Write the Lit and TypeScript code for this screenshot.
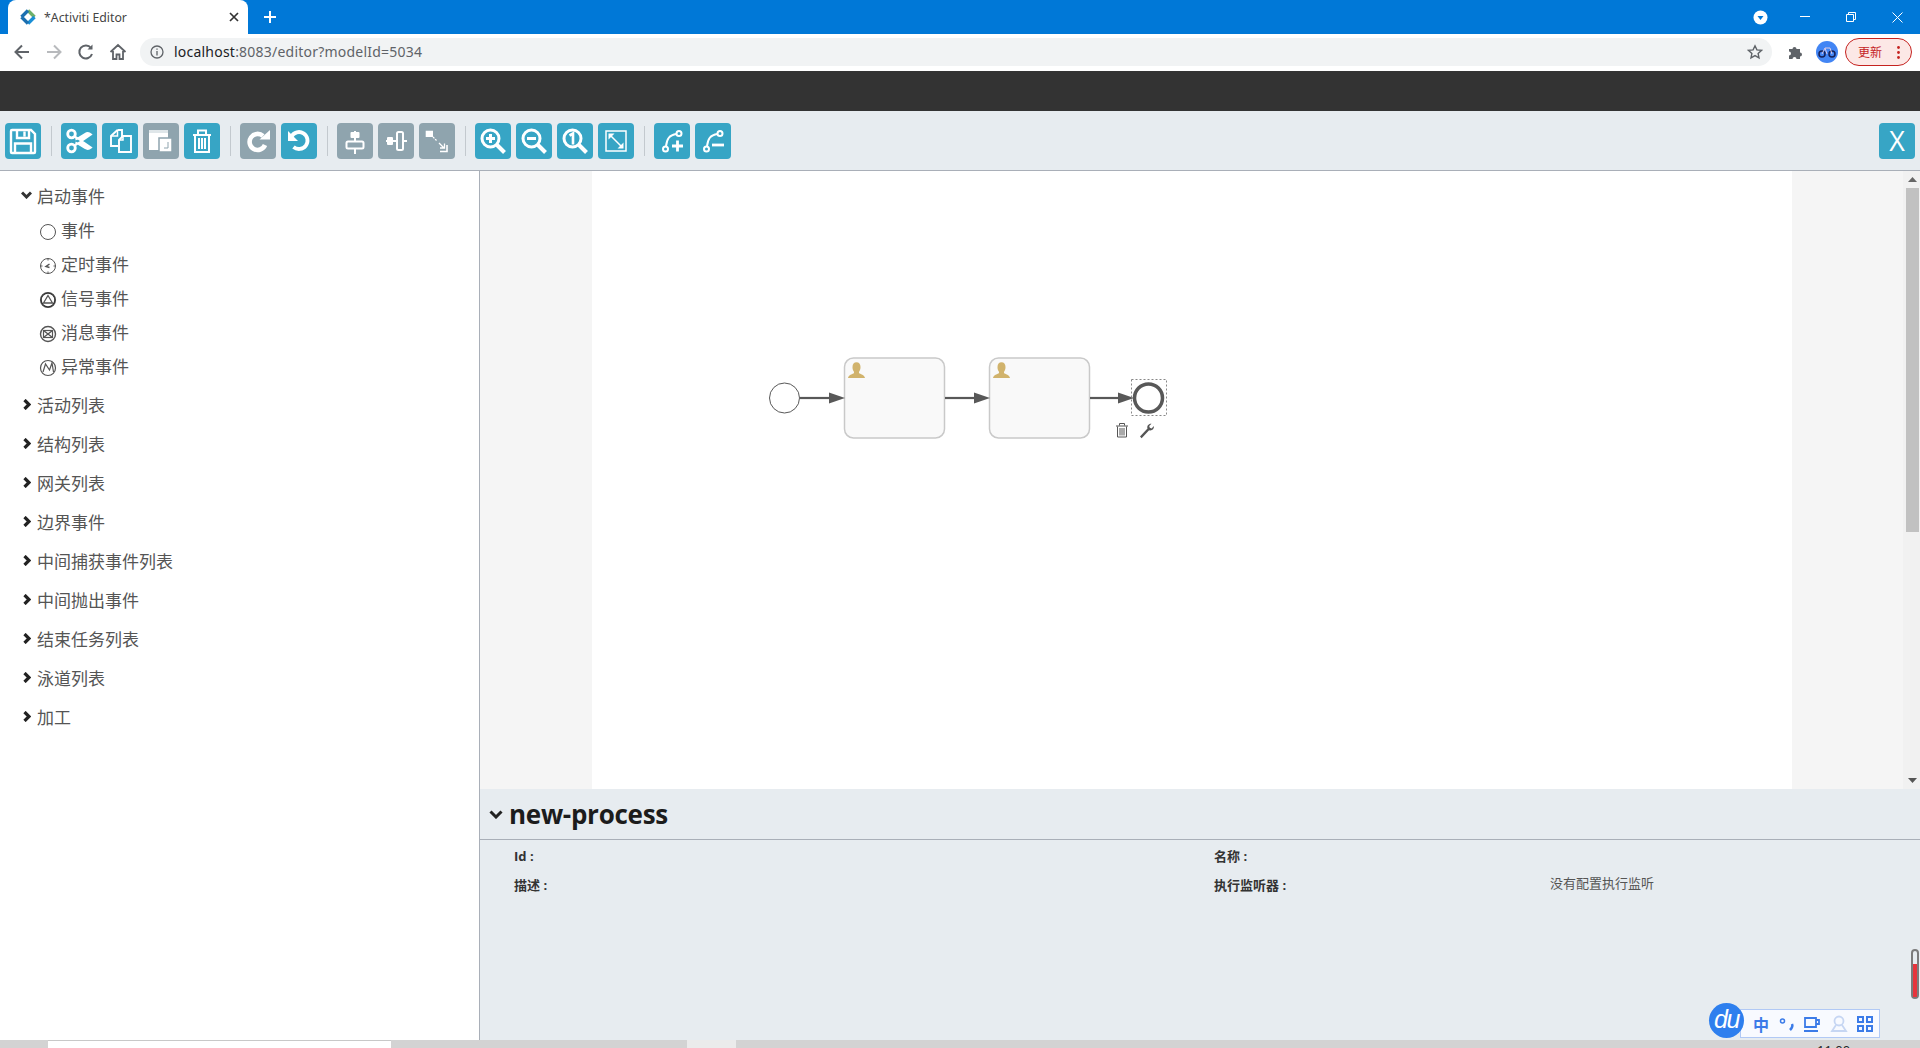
import { LitElement, html, css, svg } from "lit";
import { customElement } from "lit/decorators.js";

const S = (c: unknown, size = 36) => html`<svg class="ic" width=${size} height=${size} viewBox="0 0 36 36" fill="none" stroke="#fff" stroke-width="2">${c}</svg>`;

const icons: Record<string, unknown> = {
  save: svg`<path d="M7 7h19l4 4v18a1 1 0 0 1-1 1H7a1 1 0 0 1-1-1V8a1 1 0 0 1 1-1z" stroke-width="2.4"/><path d="M12 7v8h12V7M19.500 8.500v5" stroke-width="2.400"/><path d="M10 30V20.500h16V30" stroke-width="2.400"/>`,
  cut: svg`<circle cx="10.500" cy="11" r="3.800" stroke-width="2.800"/><circle cx="10.500" cy="25" r="3.800" stroke-width="2.800"/><path d="M14 13.500l16 11a5 5 0 0 1-6 .5L15 19.500M14 22.500l16-11a5 5 0 0 0-6-.5L15 16.500" stroke-width="2" fill="#fff"/>`,
  copy: svg`<path d="M15.500 7H20v7.500M15.500 7L9 13v10h7" stroke-width="1.900"/><path d="M15.500 7v6H9" stroke-width="1.500"/><path d="M21 13h8v16H17V17z" stroke-width="1.900"/><path d="M21 13v4h-4" stroke-width="1.500"/>`,
  paste: svg`<rect x="6" y="7" width="19" height="20" fill="#fff" stroke="none"/><rect x="6" y="7" width="19" height="3" fill="#dfe6e9" stroke="none"/><rect x="16" y="15" width="13" height="14" fill="#fff" stroke="#8fa4ae" stroke-width="1.500"/><path d="M25 19v6h-4" stroke="#8fa4ae" stroke-width="1"/>`,
  del: svg`<path d="M9 12h18M14 11V7.500h8V11M11 12v17h14V12M15 15v11M18 15v11M21 15v11" stroke-width="2"/>`,
  redo: svg`<path d="M25 22a8 8 0 1 1-2-9" stroke-width="4.600"/><path d="M19.500 16.500H30V7z" fill="#fff" stroke="none"/>`,
  undo: svg`<path d="M10.500 13.500a8.500 8.500 0 1 1 2 10.500" stroke-width="3.800"/><path d="M7 8v10h10z" fill="#fff" stroke="none"/>`,
  alignH: svg`<path d="M18 8v23" stroke-width="2"/><rect x="13.500" y="9" width="9" height="6" rx="1" fill="#fff" stroke="none"/><rect x="9.500" y="18.500" width="17" height="7" rx="1.500" fill="#8fa4ae" stroke="#fff" stroke-width="2"/>`,
  alignV: svg`<path d="M8 18h21" stroke-width="2"/><rect x="9" y="14" width="6" height="8" rx="1" fill="#fff" stroke="none"/><rect x="19" y="9" width="6" height="18" rx="1.500" fill="#8fa4ae" stroke="#fff" stroke-width="2"/>`,
  same: svg`<path d="M7.500 14V8.500H14" stroke-width="1.600"/><rect x="8" y="9" width="6" height="5" fill="#fff" stroke="none"/><path d="M14 14l4 4" stroke-width="1.300" stroke-dasharray="2 1"/><path d="M28 22v6.500h-7" stroke-width="1.600"/><path d="M20 20l5.500 5.500M21 25h4.500v-4.500" stroke-width="1.300"/>`,
  zin: svg`<circle cx="15.500" cy="15.500" r="8.500" stroke-width="3"/><path d="M22 22l7.500 7.500" stroke-width="4"/><path d="M11 15.500h9M15.500 11v9" stroke-width="3"/>`,
  zout: svg`<circle cx="15.500" cy="15.500" r="8.500" stroke-width="3"/><path d="M22 22l7.500 7.500" stroke-width="4"/><path d="M11 15.500h9" stroke-width="3"/>`,
  zone: svg`<circle cx="15.500" cy="15.500" r="8.500" stroke-width="3"/><path d="M22 22l7.500 7.500" stroke-width="4"/><path d="M12.500 12.500l3.500-2v11" stroke-width="2.600"/>`,
  fit: svg`<rect x="8" y="8" width="20" height="20" stroke-width="1.500"/><path d="M10.500 10.500h6l-6 6zM25.500 25.500h-6l6-6z" fill="#fff" stroke="none"/><path d="M12 12l12 12" stroke-width="1.500"/>`,
  dadd: svg`<circle cx="11.500" cy="26" r="2.500"/><circle cx="25" cy="10.500" r="2.500"/><path d="M12 23c1-7 3-11 10.500-12" stroke-width="2"/><path d="M18 23h11M23.500 17.500v11" stroke-width="2.800"/>`,
  drem: svg`<circle cx="11.500" cy="26" r="2.500"/><circle cx="25" cy="10.500" r="2.500"/><path d="M12 23c1-7 3-11 10.500-12" stroke-width="2"/><path d="M17 22h12" stroke-width="2.800"/>`,
};

type Btn = { i: string; g?: boolean } | "sep";
const toolbar: Btn[] = [
  { i: "save" }, "sep",
  { i: "cut" }, { i: "copy" }, { i: "paste", g: true }, { i: "del" }, "sep",
  { i: "redo", g: true }, { i: "undo" }, "sep",
  { i: "alignH", g: true }, { i: "alignV", g: true }, { i: "same", g: true }, "sep",
  { i: "zin" }, { i: "zout" }, { i: "zone" }, { i: "fit" }, "sep",
  { i: "dadd" }, { i: "drem" },
];

const ev = (inner: unknown, sw = 1) => html`<svg class="ev" width="18" height="18" viewBox="0 0 18 18" fill="none" stroke="#555" stroke-width=${sw}><circle cx="9" cy="9" r="7.500"/>${inner}</svg>`;
const startItems = [
  { t: "事件", ic: ev(svg``) },
  { t: "定时事件", ic: ev(svg`<path d="M10.500 7L7 9.500l3.500 1" stroke-width="1.500"/><path d="M9 1.500v2M9 14.500v2M1.500 9h2M14.500 9h2" />`) },
  { t: "信号事件", ic: ev(svg`<path d="M9 4.500l4.500 7.500h-9z" stroke-width="1.300"/><circle cx="9" cy="9" r="6.800" stroke="#333"/>`, 1.2) },
  { t: "消息事件", ic: ev(svg`<rect x="4.500" y="5.500" width="9" height="7" stroke-width="1.200"/><path d="M4.500 5.500L13.500 12.500M13.500 5.500L4.500 12.500"/>`, 1.400) },
  { t: "异常事件", ic: ev(svg`<path d="M4 13l2.500-8 4 6 2.500-7 1.500 9" stroke-width="1.200"/>`, 1.200) },
];
const groups = ["活动列表", "结构列表", "网关列表", "边界事件", "中间捕获事件列表", "中间抛出事件", "结束任务列表", "泳道列表", "加工"];

const user = (x: number, y: number) => svg`<path transform="translate(${x} ${y})" d="M0 16c.6-3 3.500-3.500 5.500-4.500.7-.5.7-1.500.2-2.300C4.600 7.800 4.500 6.300 4.500 5 4.500 2 6 .3 8.500.3S12.500 2 12.500 5c0 1.300-.1 2.800-1.200 4.200-.5.8-.5 1.800.2 2.300 2 1 4.900 1.500 5.500 4.500z" fill="#d1b36c"/>`;
const flow = (x1: number, x2: number) => svg`<path d="M${x1} 398H${x2 - 15}" stroke="#585858" stroke-width="2.200"/><path d="M${x2 - 16} 392.500l16 5.500-16 5.500z" fill="#585858"/>`;

@customElement("app-root")
export class AppRoot extends LitElement {
  static styles = css`
    :host { display: flex; flex-direction: column; position: relative; width: 1920px; height: 1048px; overflow: hidden; background: #fff;
      font-family: "Noto Sans", "Noto Sans CJK SC", sans-serif; color: #555; }
    svg { display: block; flex: none; }
    .tabs { height: 34px; background: #0078d7; display: flex; align-items: flex-end; flex: none; }
    .tab { width: 240px; height: 34px; margin-left: 8px; background: #fff; border-radius: 8px 8px 0 0; display: flex; align-items: center; flex: none; color: #444; font-size: 12.3px; }
    .tab .fav { margin-left: 11px; margin-right: 7px; }
    .tab .title { flex: 1; }
    .tab .close { margin-right: 8px; }
    .plus { margin-left: 16px; align-self: center; }
    .tabs .spring { flex: 1; }
    .dd { margin-right: 14px; align-self: center; }
    .win { width: 46px; height: 34px; display: flex; align-items: center; justify-content: center; }
    .nav { height: 37px; box-sizing: border-box; padding-bottom: 1px; flex: none; display: flex; align-items: center; background: #fff; }
    .nb { width: 20px; height: 20px; margin-left: 12px; flex: none; }
    .omni { margin-left: 12px; width: 1632px; height: 28px; border-radius: 14px; background: #f1f3f4; display: flex; align-items: center; flex: none; font-size: 14px; color: #202124; }
    .omni .info { margin-left: 10px; margin-right: 10px; }
    .omni .url { flex: 1; color: #5f6368; letter-spacing: .22px; margin-top: -1px; }
    .omni .url b { font-weight: 400; color: #202124; }
    .omni .star { margin-right: 9px; }
    .puzzle { margin-left: 16px; }
    .avatar { margin-left: 12px; width: 22px; height: 22px; border-radius: 50%; background: #4285f4; display: flex; align-items: center; justify-content: center; flex: none; }
    .update { margin-left: 7px; width: 67px; height: 28px; box-sizing: border-box; border: 1px solid #c5221f; border-radius: 14px; background: #fce8e6; color: #c5221f; font-size: 12px; display: flex; align-items: center; padding-left: 12px; flex: none; }
    .update span { flex: 1; }
    .update .dots { margin-right: 11px; }
    .dark { height: 40px; flex: none; background: #333; }
    .tools { height: 60px; flex: none; box-sizing: border-box; background: #e7ecf0; border-bottom: 1px solid #a9afb8; display: flex; align-items: center; gap: 5px; padding: 0 5px; }
    .tb { width: 36px; height: 36px; border-radius: 4px; background: #37a5c5; flex: none; display: flex; align-items: center; justify-content: center; }
    .tb.g { background: #8fa4ae; }
    .tsep { width: 1px; height: 30px; background: #c3c9ce; margin: 0 4px 0 5px; flex: none; }
    .tb.x { color: #fff; font-family: "Open Sans", sans-serif; font-size: 27px; line-height: 36px; text-align: center; }
    .tools .spring { flex: 1; }
    .main { flex: 1; display: flex; min-height: 0; }
    .palette { width: 480px; box-sizing: border-box; border-right: 1px solid #a9afb8; flex: none; background: #fff; padding-top: 7px; font-size: 17px; color: #555; }
    .row { display: flex; align-items: center; height: 39px; }
    .row.open { height: 34px; padding-left: 21px; gap: 5px; }
    .row.closed { padding-left: 23px; gap: 6px; }
    .row.item { height: 34px; padding-left: 39px; gap: 4px; }
    .row.item .ev { margin-top: 5px; }
    .list { padding-top: 3px; }
    .right { flex: 1; display: flex; flex-direction: column; min-width: 0; }
    .canvas { height: 618px; flex: none; display: flex; background: #f5f5f5; }
    .gutter { flex: none; }
    .gutter.l { width: 112px; }
    .gutter.r { width: 111px; }
    .paper { width: 1200px; background: #fff; flex: none; }
    .sb { width: 17px; background: #f1f1f1; flex: none; display: flex; flex-direction: column; align-items: flex-end; }
    .sb .ar { width: 15px; height: 17px; display: flex; align-items: center; justify-content: center; }
    .sb .th { width: 13px; margin-right: 1px; height: 344px; background: #c1c1c1; }
    .sb .sp { flex: 1; }
    .props { flex: 1; background: #e7ecf0; display: flex; flex-direction: column; }
    .phead { height: 51px; flex: none; box-sizing: border-box; border-bottom: 1px solid #a9afb8; display: flex; align-items: center; padding-left: 9px; gap: 6px; }
    .phead h2 { margin: 0; font: 700 26px "Open Sans", "Noto Sans CJK SC", sans-serif; color: #1c1c1c; letter-spacing: -.28px; }
    .pgrid { display: grid; grid-template-columns: 700px 335px 1fr; grid-auto-rows: 29px; padding: 1px 0 0 34px; align-items: center; font: 13px "Open Sans", "Noto Sans CJK SC", sans-serif; color: #333; }
    .pgrid b { font-weight: 700; }
    .pgrid .val { color: #555; margin-top: -4px; margin-left: 1px; }
    .hbar { height: 8px; flex: none; display: flex; background: #d3d3d3; overflow: hidden; }
    .hbar .a { width: 48px; flex: none; }
    .hbar .b { width: 343px; box-sizing: border-box; border-top: 1px solid #c8c8c8; background: #fff; flex: none; }
    .hbar .c { width: 296px; flex: none; }
    .hbar .d { width: 49px; background: #ebebeb; flex: none; }
    .hbar .e { flex: 1; padding: 1px 0 0 1081px; font-size: 13px; line-height: 18px; color: #222; white-space: nowrap; }
    .thermo { position: absolute; left: 1911px; top: 949px; width: 8px; height: 50px; box-sizing: border-box; border: 2px solid #7b7b7b; border-radius: 4px; background: #e7ecf0; display: flex; flex-direction: column; justify-content: flex-end; }
    .thermo i { display: block; height: 33px; background: #e6343c; }
    .ime { position: absolute; left: 1709px; top: 1003px; display: flex; align-items: center; }
    .du { width: 35px; height: 35px; border-radius: 50%; background: #2e7fee; color: #fff; position: relative; z-index: 1; font: italic 400 25px/32px "Liberation Sans", sans-serif; text-align: center; letter-spacing: -1.5px; }
    .imep { margin-left: -4px; box-sizing: border-box; width: 140px; height: 29px; margin-top: 6px; background: #f8faff; border: 1px solid #b1c9f5; display: flex; align-items: center; padding-left: 12px; gap: 8px; color: #3b7be8; }
    .imep .zh { font: 700 16px "Noto Sans CJK SC", sans-serif; width: 16px; margin-right: 2px; }
  `;

  private diagram() {
    return html`<svg width="1200" height="618" viewBox="592 171 1200 618" fill="none">
      <circle cx="784.500" cy="398" r="15" fill="#fff" stroke="#585858" stroke-width="1"/>
      <rect x="844.500" y="358" width="100" height="80" rx="9" fill="#f9f9f9" stroke="#c9c9c9" stroke-width="1.500"/>
      <rect x="989.500" y="358" width="100" height="80" rx="9" fill="#f9f9f9" stroke="#c9c9c9" stroke-width="1.500"/>
      ${user(848, 362)}${user(993, 362)}
      ${flow(800, 845)}${flow(945, 990)}${flow(1090, 1134)}
      <rect x="1131.500" y="379.500" width="35" height="36" stroke="#888" stroke-dasharray="2 2"/>
      <circle cx="1148.500" cy="398" r="14" fill="#fff" stroke="#585858" stroke-width="3.500"/>
      <g stroke="#555" stroke-width="1"><path d="M1116 426h12M1119.500 425.500v-2h5v2M1117.500 426.500v10.500h9v-10.500M1120 428v7.500M1122 428v7.500M1124 428v7.500"/></g>
      <path d="M1140 436.500l7.500-8c-.8-2.500.8-5 4-4.800l-2.300 2.300.6 1.800 1.800.6 2.300-2.300c.4 3.200-2 5-4.800 4.200l-7.500 8z" fill="#555"/>
    </svg>`;
  }

  render() {
    return html`
      <div class="tabs">
        <div class="tab">
          <svg class="fav" width="18" height="18" viewBox="0 0 18 18" fill="none" stroke-width="3.400"><path d="M9 2.500L15.500 9" stroke="#6fb06a"/><path d="M15.500 9L9 15.500" stroke="#1a8fd6"/><path d="M9 15.500L2.500 9M2.500 9L9 2.500" stroke="#1b6fb0"/></svg>
          <span class="title">*Activiti Editor</span>
          <svg class="close" width="12" height="12" viewBox="0 0 12 12" stroke="#333" stroke-width="1.700"><path d="M2 2l8 8M10 2l-8 8"/></svg>
        </div>
        <svg class="plus" width="12" height="12" viewBox="0 0 12 12" stroke="#fff" stroke-width="2"><path d="M6 0v12M0 6h12"/></svg>
        <div class="spring"></div>
        <svg class="dd" width="15" height="15" viewBox="0 0 15 15"><circle cx="7.500" cy="7.500" r="7" fill="#fff"/><path d="M4.500 6h6l-3 4z" fill="#0078d7"/></svg>
        <div class="win"><svg width="10" height="10" viewBox="0 0 10 10" stroke="#fff"><path d="M0 4.500h10"/></svg></div>
        <div class="win"><svg width="10" height="10" viewBox="0 0 10 10" fill="none" stroke="#fff"><path d="M.500 2.500h7v7h-7zM2.500 2.500v-2h7v7h-2"/></svg></div>
        <div class="win"><svg width="11" height="11" viewBox="0 0 11 11" stroke="#fff"><path d="M.500.500l10 10M10.500.500l-10 10"/></svg></div>
      </div>
      <div class="nav">
        <svg class="nb" viewBox="0 0 20 20" fill="none" stroke="#5f6368" stroke-width="2"><path d="M17 10H4M10 3.500L3.500 10l6.500 6.500"/></svg>
        <svg class="nb" viewBox="0 0 20 20" fill="none" stroke="#b8babd" stroke-width="2"><path d="M3 10h13M10 3.500l6.500 6.500-6.500 6.500"/></svg>
        <svg class="nb" viewBox="0 0 20 20" fill="none" stroke="#5f6368" stroke-width="2"><path d="M16 12a6.500 6.500 0 1 1-1-6"/><path d="M16.500 2.500v5h-5z" fill="#5f6368" stroke="none"/></svg>
        <svg class="nb" viewBox="0 0 20 20" fill="none" stroke="#5f6368" stroke-width="1.800"><path d="M2.500 10L10 3l7.500 7M5 9v8h3.500v-4.500h3V17H15V9"/></svg>
        <div class="omni">
          <svg class="info" width="14" height="14" viewBox="0 0 14 14" fill="none" stroke="#5f6368" stroke-width="1.300"><circle cx="7" cy="7" r="6"/><path d="M7 6v4.500M7 3.500v1.300"/></svg>
          <span class="url"><b>localhost</b>:8083/editor?modelId=5034</span>
          <svg class="star" width="16" height="16" viewBox="0 0 16 16" fill="none" stroke="#5f6368" stroke-width="1.400"><path d="M8 1.800l1.900 4.100 4.500.5-3.300 3 .9 4.400L8 11.600l-4 2.200.9-4.400-3.300-3 4.500-.5z"/></svg>
        </div>
        <svg class="puzzle" width="16" height="16" viewBox="0 0 16 16" fill="#5f6368"><path d="M1 5h3.500a2 2 0 1 1 4 0H12v3.500a2 2 0 1 1 0 4V15H8.500a2 2 0 1 0-4 0H1v-3.500a2 2 0 1 0 0-4z"/></svg>
        <div class="avatar"><svg width="18" height="12" viewBox="0 0 18 12" fill="none" stroke="#14205a" stroke-width="1.500"><circle cx="4" cy="8" r="3"/><circle cx="14" cy="8" r="3"/><path d="M4 8l3-6h5l2 6M7 2l2 6" stroke="#d9c9e8" stroke-width="1"/></svg></div>
        <div class="update"><span>更新</span><svg class="dots" width="3" height="13" viewBox="0 0 3 13" fill="#c5221f"><circle cx="1.500" cy="1.500" r="1.400"/><circle cx="1.500" cy="6.500" r="1.400"/><circle cx="1.500" cy="11.500" r="1.400"/></svg></div>
      </div>
      <div class="dark"></div>
      <div class="tools">
        ${toolbar.map((b) => b === "sep" ? html`<div class="tsep"></div>` : html`<div class="tb ${b.g ? "g" : ""}">${S(icons[b.i])}</div>`)}
        <div class="spring"></div>
        <div class="tb x">X</div>
      </div>
      <div class="main">
        <div class="palette">
          <div class="row open"><svg width="11" height="8" viewBox="0 0 11 8" fill="none" stroke="#333" stroke-width="3"><path d="M1 1.500l4.500 4.500L10 1.500"/></svg><span>启动事件</span></div>
          ${startItems.map((it) => html`<div class="row item">${it.ic}<span>${it.t}</span></div>`)}
          <div class="list">
            ${groups.map((g) => html`<div class="row closed"><svg width="8" height="11" viewBox="0 0 8 11" fill="none" stroke="#222" stroke-width="3.200"><path d="M1.500 1L6 5.500 1.500 10"/></svg><span>${g}</span></div>`)}
          </div>
        </div>
        <div class="right">
          <div class="canvas">
            <div class="gutter l"></div>
            <div class="paper">${this.diagram()}</div>
            <div class="gutter r"></div>
            <div class="sb">
              <div class="ar"><svg width="9" height="5" viewBox="0 0 9 5" fill="#666"><path d="M4.500 0L9 5H0z"/></svg></div>
              <div class="th"></div>
              <div class="sp"></div>
              <div class="ar"><svg width="9" height="5" viewBox="0 0 9 5" fill="#555"><path d="M0 0h9L4.500 5z"/></svg></div>
            </div>
          </div>
          <div class="props">
            <div class="phead"><svg width="14" height="9" viewBox="0 0 14 9" fill="none" stroke="#222" stroke-width="3"><path d="M1.500 1.500L7 7l5.500-5.500"/></svg><h2>new-process</h2></div>
            <div class="pgrid">
              <b>Id :</b><b>名称 :</b><span></span>
              <b>描述 :</b><b>执行监听器 :</b><span class="val">没有配置执行监听</span>
            </div>
          </div>
        </div>
      </div>
      <div class="hbar"><div class="a"></div><div class="b"></div><div class="c"></div><div class="d"></div><div class="e">11:00</div></div>
      <div class="thermo"><i></i></div>
      <div class="ime">
        <div class="du">du</div>
        <div class="imep">
          <span class="zh">中</span>
          <svg width="16" height="16" viewBox="0 0 16 16" fill="none" stroke="#3b7be8" stroke-width="1.500"><circle cx="3.500" cy="5" r="2"/><path d="M13 8c1 2 0 4-2 6" stroke-width="2.500"/></svg>
          <svg width="18" height="18" viewBox="0 0 18 18" fill="none" stroke="#3b7be8" stroke-width="1.800"><path d="M2 3h11v9H2zM13 5h3v4h-3M1 16h14"/></svg>
          <svg width="20" height="18" viewBox="-2 0 20 18" fill="none" stroke="#c6d6f3" stroke-width="1.800"><circle cx="8" cy="6" r="4.500"/><path d="M5 10l-4 6h14l-4-6"/></svg>
          <svg width="16" height="16" viewBox="0 0 16 16" fill="none" stroke="#3b7be8" stroke-width="2"><path d="M1 1h5v5H1zM10 1h5v5h-5zM1 10h5v5H1zM10 10h5v5h-5z"/></svg>
        </div>
      </div>
    `;
  }
}
